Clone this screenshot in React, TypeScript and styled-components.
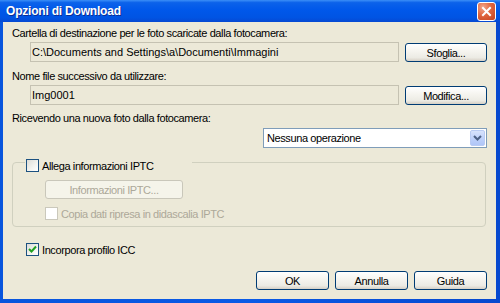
import { createGlobalStyle } from "styled-components";
import styled from "styled-components";

const FONT = `"Liberation Sans", Arial, sans-serif`;

const GlobalStyle = createGlobalStyle`
  html, body {
    margin: 0;
    padding: 0;
    background: #ece9d8;
  }
  body {
    font-family: ${FONT};
    font-size: 11px;
    letter-spacing: -0.4px;
    color: #000;
  }
`;

const Window = styled.div`
  width: 500px;
  height: 303px;
  box-sizing: border-box;
  display: flex;
  flex-direction: column;
  background: linear-gradient(to right, #0855dd 0%, #0a5ae6 50%, #0749cf 100%);
`;

const TitleBar = styled.div`
  height: 22px;
  flex: none;
  display: flex;
  align-items: center;
  justify-content: space-between;
  padding: 0 4px 0 6px;
  background: linear-gradient(
    to bottom,
    #3b8ff7 0%,
    #0c62ea 12%,
    #0058ea 45%,
    #0054e3 80%,
    #0649d2 100%
  );
`;

const Title = styled.span`
  color: #fff;
  font-family: ${FONT};
  font-weight: bold;
  font-size: 12px;
  letter-spacing: -0.2px;
  text-shadow: 1px 1px 0 #0b2e95;
`;

const CloseBtn = styled.div`
  width: 19px;
  height: 19px;
  box-sizing: border-box;
  border: 1px solid #fff;
  border-radius: 3px;
  background: radial-gradient(circle at 30% 25%, #f1a58b 0%, #e0663f 45%, #c44220 100%);
  display: flex;
  align-items: center;
  justify-content: center;
  margin-top: 1px;
`;

const Body = styled.div`
  flex: 1;
  margin: 0 4px 4px 3px;
  background: #ece9d8;
  padding: 5px 9px 0 9px;
  display: flex;
  flex-direction: column;
`;

const Label = styled.div<{ $gap: number }>`
  height: 13px;
  line-height: 13px;
  margin-top: ${(p) => p.$gap}px;
  white-space: nowrap;
`;

const FieldRow = styled.div<{ $gap: number }>`
  display: flex;
  align-items: flex-end;
  gap: 6px;
  height: 20px;
  margin-top: ${(p) => p.$gap}px;
  padding-left: 18px;
`;

const Field = styled.div`
  flex: 1;
  height: 20px;
  box-sizing: border-box;
  border: 1px solid #c5c2b2;
  background: #ece9d8;
  padding-left: 1px;
  line-height: 18px;
  letter-spacing: 0;
  white-space: nowrap;
`;

const Button = styled.div<{ $w: number; $disabled?: boolean; $gap?: number }>`
  width: ${(p) => p.$w}px;
  height: 19px;
  flex: none;
  margin-top: ${(p) => p.$gap ?? 0}px;
  box-sizing: border-box;
  border: 1px solid ${(p) => (p.$disabled ? "#c9c7ba" : "#003c74")};
  border-radius: 3px;
  background: ${(p) =>
    p.$disabled
      ? "#f5f4ea"
      : "linear-gradient(to bottom, #ffffff 0%, #f6f5f0 40%, #ecebe4 80%, #d6d0c5 100%)"};
  color: ${(p) => (p.$disabled ? "#aca899" : "#000")};
  display: flex;
  align-items: center;
  justify-content: center;
  white-space: nowrap;
`;

const Select = styled.div`
  margin-top: 3px;
  margin-left: auto;
  width: 224px;
  height: 20px;
  box-sizing: border-box;
  border: 1px solid #7f9db9;
  background: #fff;
  display: flex;
  align-items: center;
  justify-content: space-between;
  padding: 1px 1px 1px 3px;
`;

const SelectArrow = styled.div`
  width: 15px;
  height: 16px;
  box-sizing: border-box;
  border: 1px solid #b9cbf3;
  border-radius: 2px;
  background: linear-gradient(to bottom, #d8e3fc 0%, #bccffa 60%, #b0c6f7 100%);
  display: flex;
  align-items: center;
  justify-content: center;
`;

const Group = styled.fieldset`
  margin: 5px 1px 0 0;
  padding: 0 0 6px 12px;
  border: 1px solid #d0d0bf;
  border-radius: 4px;
  min-width: 0;
`;

const Legend = styled.legend`
  margin: 0;
  padding: 0 0 0 1px;
  width: 167px;
  height: 19px;
  box-sizing: border-box;
  display: flex;
  align-items: flex-end;
`;

const GroupBody = styled.div`
  padding-left: 20px;
  display: flex;
  flex-direction: column;
  align-items: flex-start;
`;

const CheckRow = styled.div<{ $gap?: number; $disabled?: boolean }>`
  display: flex;
  align-items: center;
  gap: 3px;
  height: 13px;
  margin-top: ${(p) => p.$gap ?? 0}px;
  color: ${(p) => (p.$disabled ? "#aca899" : "#000")};
  white-space: nowrap;
`;

const Box = styled.span<{ $disabled?: boolean }>`
  width: 13px;
  height: 13px;
  flex: none;
  box-sizing: border-box;
  border: 1px solid ${(p) => (p.$disabled ? "#cac8bb" : "#1c5180")};
  background: ${(p) =>
    p.$disabled ? "#fff" : "linear-gradient(135deg, #dcdcd7 0%, #f4f4f0 60%, #ffffff 100%)"};
  display: flex;
  align-items: center;
  justify-content: center;
`;

const IccRow = styled(CheckRow)`
  margin-left: 14px;
`;

const Footer = styled.div`
  display: flex;
  justify-content: flex-end;
  gap: 6px;
  margin-top: 15px;
`;

function Checkbox({ label, checked, disabled }: { label: string; checked?: boolean; disabled?: boolean }) {
  return (
    <>
      <Box $disabled={disabled}>
        {checked && (
          <svg width="9" height="9" viewBox="0 0 9 9">
            <path d="M1 4 L3.5 6.5 L8 1.5" stroke="#21a121" strokeWidth="2" fill="none" />
          </svg>
        )}
      </Box>
      <span>{label}</span>
    </>
  );
}

export default function App() {
  return (
    <>
      <GlobalStyle />
      <Window>
        <TitleBar>
          <Title>Opzioni di Download</Title>
          <CloseBtn>
            <svg width="11" height="11" viewBox="0 0 11 11">
              <path d="M2 2 L9 9 M9 2 L2 9" stroke="#fff" strokeWidth="2" strokeLinecap="square" />
            </svg>
          </CloseBtn>
        </TitleBar>
        <Body>
          <Label $gap={0}>Cartella di destinazione per le foto scaricate dalla fotocamera:</Label>
          <FieldRow $gap={2}>
            <Field>C:\Documents and Settings\a\Documenti\Immagini</Field>
            <Button $w={82}>Sfoglia...</Button>
          </FieldRow>
          <Label $gap={8}>Nome file successivo da utilizzare:</Label>
          <FieldRow $gap={2}>
            <Field>Img0001</Field>
            <Button $w={82}>Modifica...</Button>
          </FieldRow>
          <Label $gap={7}>Ricevendo una nuova foto dalla fotocamera:</Label>
          <Select>
            <span>Nessuna operazione</span>
            <SelectArrow>
              <svg width="9" height="6" viewBox="0 0 9 6">
                <path d="M1 1 L4.5 4.5 L8 1" stroke="#4d6185" strokeWidth="2" fill="none" />
              </svg>
            </SelectArrow>
          </Select>
          <Group>
            <Legend>
              <CheckRow>
                <Checkbox label="Allega informazioni IPTC" />
              </CheckRow>
            </Legend>
            <GroupBody>
              <Button $w={138} $disabled $gap={8}>
                Informazioni IPTC...
              </Button>
              <CheckRow $gap={8} $disabled>
                <Checkbox label="Copia dati ripresa in didascalia IPTC" disabled />
              </CheckRow>
            </GroupBody>
          </Group>
          <IccRow $gap={16}>
            <Checkbox label="Incorpora profilo ICC" checked />
          </IccRow>
          <Footer>
            <Button $w={73}>OK</Button>
            <Button $w={73}>Annulla</Button>
            <Button $w={73}>Guida</Button>
          </Footer>
        </Body>
      </Window>
    </>
  );
}
